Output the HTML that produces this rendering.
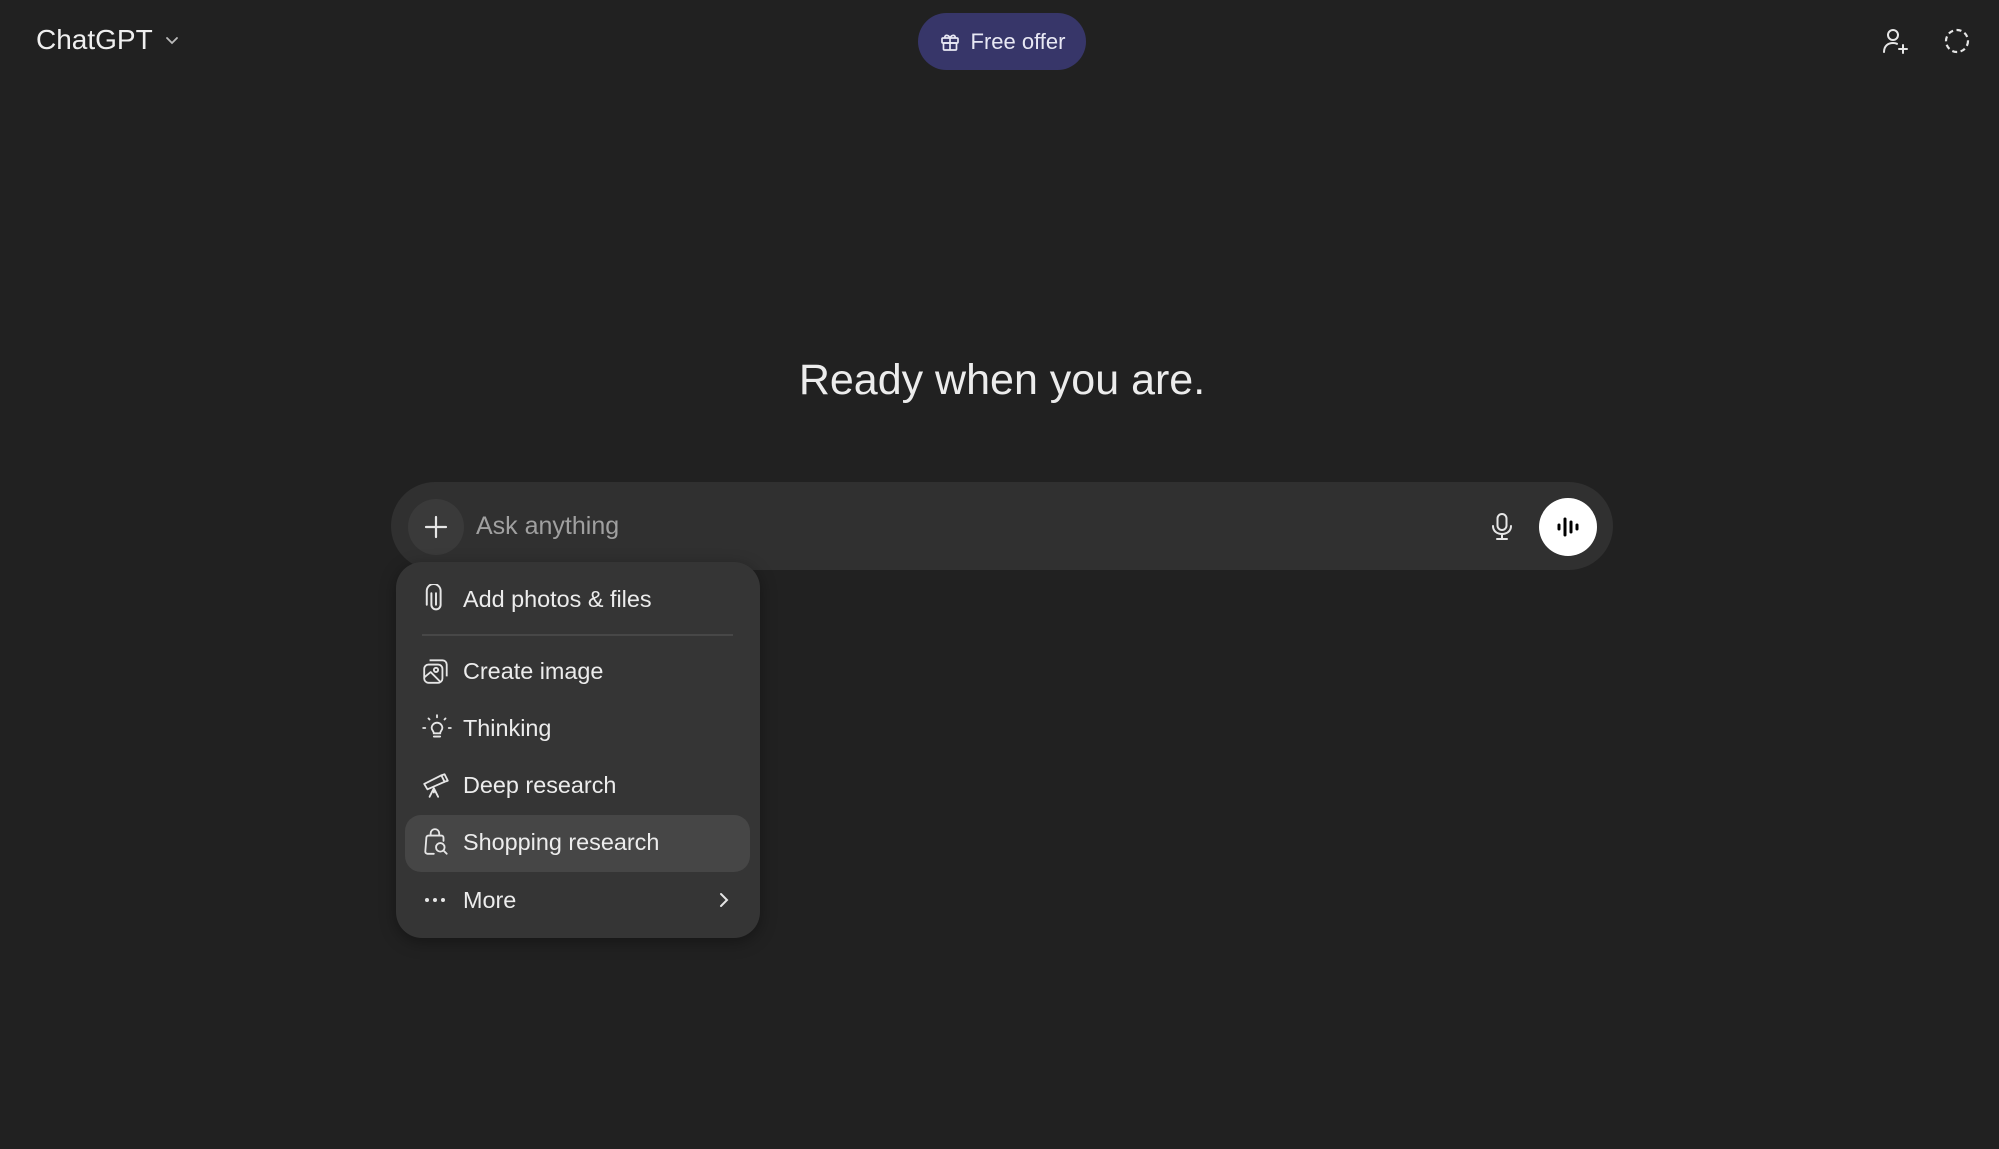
<!DOCTYPE html>
<html><head><meta charset="utf-8"><style>
*{margin:0;padding:0;box-sizing:border-box}
body{width:1999px;height:1149px;background:#212121;font-family:"Liberation Sans",sans-serif;color:#ececec;position:relative;overflow:hidden}
.abs{position:absolute}
.brand{left:36px;top:24px;font-size:28px;color:#f0f0f0;display:flex;align-items:center;gap:10px}
.pill{left:918px;top:13px;width:168px;height:57px;border-radius:29px;background:#373669;display:flex;align-items:center;justify-content:center;gap:10px;font-size:22px;color:#e8e8f4}
h1{position:absolute;left:0;width:2004px;top:356px;text-align:center;font-weight:400;font-size:43px;color:#ececec}
.bar{left:391px;top:482px;width:1222px;height:88px;border-radius:44px;background:#303030}
.plus{left:408px;top:499px;width:56px;height:56px;border-radius:50%;background:#3a3a3a;display:flex;align-items:center;justify-content:center}
.ph{left:476px;top:512px;font-size:25px;color:#a0a0a0}
.voice{left:1539px;top:498px;width:58px;height:58px;border-radius:50%;background:#fff;display:flex;align-items:center;justify-content:center}
.menu{left:396px;top:562px;width:364px;height:376px;border-radius:26px;background:#353535;box-shadow:0 4px 16px rgba(0,0,0,.35)}
.item{position:absolute;left:0;width:364px;height:56px;display:flex;align-items:center;font-size:23.4px;color:#ececec}
.item svg{position:absolute;left:25px}
.item span{position:absolute;left:67px}
.hl{left:405px;top:815px;width:345px;height:57px;border-radius:16px;background:#464646}
.div{left:422px;top:634px;width:311px;height:2px;background:#474747}
</style></head><body>
<div class="abs brand">ChatGPT <svg width="18" height="18" viewBox="0 0 18 18"><path d="M4 7l5 5 5-5" fill="none" stroke="#bbb" stroke-width="1.8" stroke-linecap="round"/></svg></div>
<div class="abs pill"><svg width="22" height="22" viewBox="0 0 22 22" fill="none" stroke="#e8e8f4" stroke-width="1.7"><rect x="3" y="7" width="16" height="5" rx="1"/><rect x="4.5" y="12" width="13" height="7" rx="1"/><path d="M11 7v12M11 7c-2-4-6-3-5 0M11 7c2-4 6-3 5 0"/></svg>Free offer</div>
<svg class="abs" style="left:1880px;top:26px" width="30" height="30" viewBox="0 0 30 30" fill="none" stroke="#e6e6e6" stroke-width="2" stroke-linecap="round"><circle cx="13" cy="9" r="5"/><path d="M4 26c0-6 4-9 9-9 2 0 3 .3 4 .8"/><path d="M23 19v8M19 23h8"/></svg>
<svg class="abs" style="left:1943px;top:27px" width="28" height="28" viewBox="0 0 28 28" fill="none" stroke="#e6e6e6" stroke-width="2.2" stroke-dasharray="5 3.5"><circle cx="14" cy="14" r="11"/></svg>
<h1>Ready when you are.</h1>
<div class="abs bar"></div>
<div class="abs plus"><svg width="26" height="26" viewBox="0 0 26 26" stroke="#e6e6e6" stroke-width="2.2" stroke-linecap="round"><path d="M13 3v20M3 13h20"/></svg></div>
<div class="abs ph">Ask anything</div>
<svg class="abs" style="left:1489px;top:512px" width="26" height="30" viewBox="0 0 26 30" fill="none" stroke="#e6e6e6" stroke-width="2" stroke-linecap="round"><rect x="8.5" y="2" width="9" height="16" rx="4.5"/><path d="M4 14c0 5 4 8 9 8s9-3 9-8M13 22v5M8 27h10"/></svg>
<div class="abs voice"><svg width="28" height="28" viewBox="0 0 28 28" stroke="#000" stroke-width="3" stroke-linecap="round"><path d="M5 12v4M11 6v16M17 9v10M23 12v4"/></svg></div>
<div class="abs menu"></div>
<div class="abs hl"></div>
<div class="abs div"></div>
<div class="abs" style="left:396px;top:562px;width:364px;height:376px">
 <div class="item" style="top:9px"><svg width="30" height="30" viewBox="0 0 26 26" fill="none" stroke="#e6e6e6" stroke-width="1.7" stroke-linecap="round"><path d="M9 8v10a4 4 0 0 0 8 0V6a6 6 0 0 0-12 0v12"/><path d="M13 8v10"/></svg><span>Add photos &amp; files</span></div>
 <div class="item" style="top:81px"><svg width="30" height="30" viewBox="0 0 28 28" fill="none" stroke="#e6e6e6" stroke-width="1.7" stroke-linejoin="round"><rect x="3" y="8" width="17" height="17" rx="4"/><path d="M8 4h12a4 4 0 0 1 4 4v11"/><circle cx="14" cy="13" r="2"/><path d="M3 20l6-5 9 9"/></svg><span>Create image</span></div>
 <div class="item" style="top:138px"><svg width="32" height="32" viewBox="0 0 30 30" fill="none" stroke="#e6e6e6" stroke-width="1.7" stroke-linecap="round"><path d="M10 15a5 5 0 1 1 10 0c0 2-2 3-2 5h-6c0-2-2-3-2-5z"/><path d="M12 23h6M15 3v2M7 6l1 1M23 6l-1 1M2 15h2M26 15h2"/></svg><span>Thinking</span></div>
 <div class="item" style="top:195px"><svg width="30" height="30" viewBox="0 0 28 28" fill="none" stroke="#e6e6e6" stroke-width="1.7" stroke-linecap="round" stroke-linejoin="round"><path d="M3 13l16-8 3 6-16 7z"/><path d="M19 5l3-1 3 6-3 1"/><path d="M12 17l-4 8M12 17l4 8M12 17v4"/></svg><span>Deep research</span></div>
 <div class="item" style="top:252px"><svg width="30" height="30" viewBox="0 0 28 28" fill="none" stroke="#e6e6e6" stroke-width="1.7" stroke-linecap="round"><path d="M12 25H6a2 2 0 0 1-2-2l1-13a2 2 0 0 1 2-2h12a2 2 0 0 1 2 2v3"/><path d="M9 8V6a4 4 0 0 1 8 0v2"/><circle cx="18" cy="19" r="4"/><path d="M21 22l3 3"/></svg><span>Shopping research</span></div>
 <div class="item" style="top:310px"><svg width="28" height="26" viewBox="0 0 26 26" fill="#e6e6e6"><circle cx="5" cy="13" r="2"/><circle cx="13" cy="13" r="2"/><circle cx="21" cy="13" r="2"/></svg><span>More</span><svg style="left:320px" width="16" height="20" viewBox="0 0 16 20" fill="none" stroke="#e6e6e6" stroke-width="2" stroke-linecap="round"><path d="M5 4l6 6-6 6"/></svg></div>
</div>
</body></html>
